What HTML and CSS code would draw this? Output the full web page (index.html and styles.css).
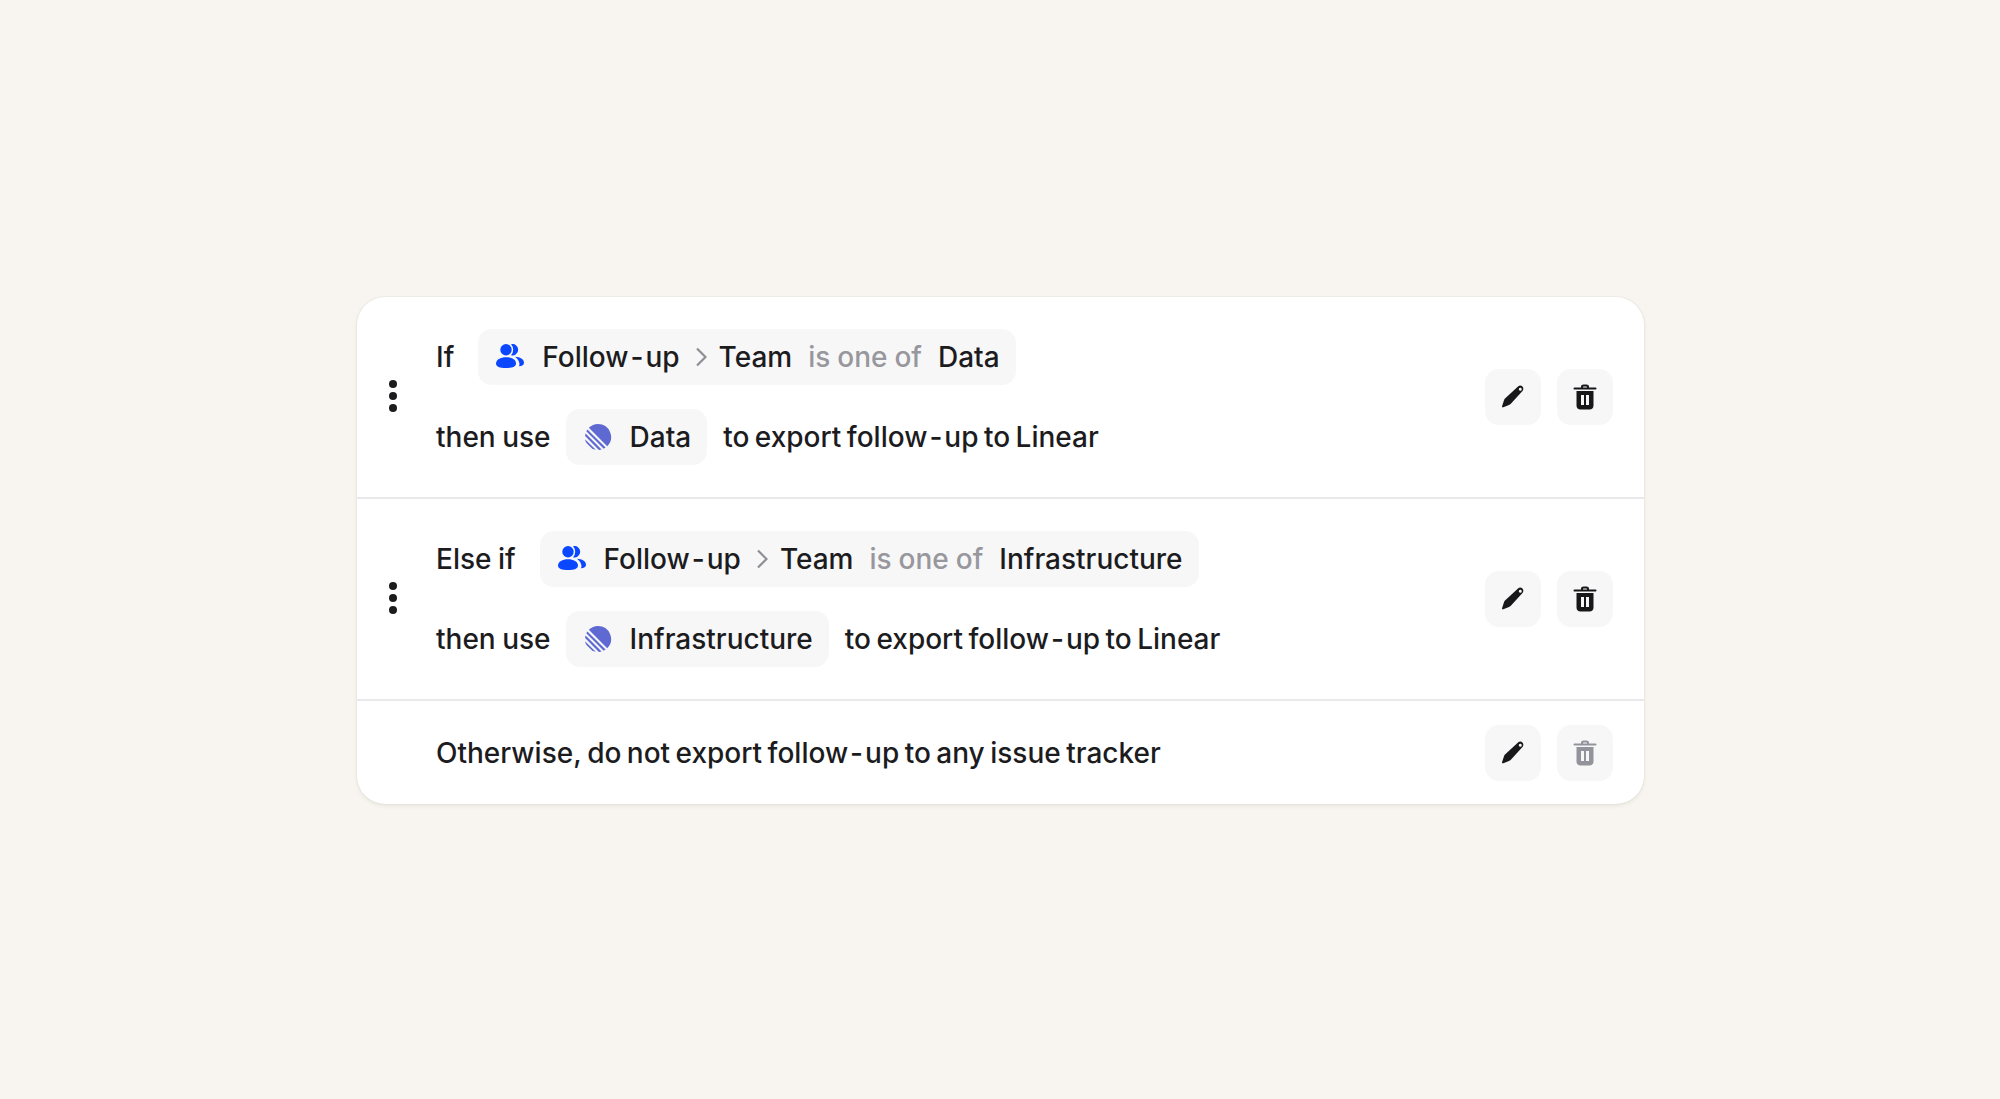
FILE: index.html
```html
<!DOCTYPE html>
<html lang="en">
<head>
<meta charset="utf-8">
<title>Export rules</title>
<link rel="stylesheet" href="styles.css">
</head>
<body>
<svg width="0" height="0" class="defs">
  <defs>
    <symbol id="people" viewBox="0 0 28 24">
      <circle cx="10" cy="5.700" r="5.700"/>
      <path d="M0 19.500C0 15.500 4.500 13.200 10 13.200s10 2.300 10 6.300c0 3.200-3.500 4.500-10 4.500S0 22.700 0 19.500z"/>
      <path d="M15 .2A5.700 5.700 0 1 1 15 11.200 8 8 0 0 0 15 .2z"/>
      <path d="M19 12.800c5 .2 9 2.500 9 6 0 2.400-2 3.400-5 3.500.4-1 .6-2 .4-3-.4-2.400-2-4.500-4.400-6.500z"/>
    </symbol>
    <symbol id="linear" viewBox="0 0 26 26">
      <path d="M13 0a13 13 0 0 1 9.200 22.200L3.800 3.800A13 13 0 0 1 13 0z"/>
      <path d="M2.400 5.400 20.600 23.600a13 13 0 0 1-1.900 1.100L1.300 7.300a13 13 0 0 1 1.100-1.900z"/>
      <path d="M.6 9.400 16.600 25.400a13 13 0 0 1-2.700.5L.1 12.100a13 13 0 0 1 .5-2.700z"/>
      <path d="M0 15.200 10.800 25.800a13 13 0 0 1-4-1.500L1.500 19a13 13 0 0 1-1.500-3.800z"/>
    </symbol>
    <symbol id="pencil" viewBox="0 0 24 24">
      <path fill-rule="evenodd" d="M17 1.500c1.300-1.200 3.200-1.200 4.400 0s1.300 3.200.1 4.500L9.600 18.900c-.5.500-1 .8-1.600 1L2.300 22.300c-.9.300-1.500-.3-1.200-1.200L3 15.200c.2-.7.500-1.200 1-1.700zM19.200 2.700a1.500 1.500 0 1 0 .1 3 1.500 1.500 0 0 0-.1-3z"/>
    </symbol>
    <symbol id="trash" viewBox="0 0 24 26">
      <path fill-rule="evenodd" d="M8 3.500V2.800C8 1.300 9.200.5 10.500.5h3C14.800.5 16 1.300 16 2.800v.7h6.500a1 1 0 0 1 0 2h-21a1 1 0 0 1 0-2zM10 3.500h4V3c0-.4-.2-.6-.6-.6h-2.800c-.4 0-.6.200-.6.600z"/>
      <path fill-rule="evenodd" d="M3.500 7h17v14.500c0 2.500-1.700 4-4 4h-9c-2.300 0-4-1.500-4-4zM8 11v10h3V11zM13 11v10h3V11z"/>
    </symbol>
  </defs>
</svg>
<main class="card">
  <section class="row row-rule">
    <span class="handle"><i></i><i></i><i></i></span>
    <div class="rule">
      <div class="line">
        <span class="word-if">If</span>
        <span class="pill">
          <svg class="ico ico-people"><use href="#people"/></svg>
          <span class="lab">Follow<span class="hy">-</span>up</span>
          <svg class="chev" viewBox="0 0 12 20"><path d="M2 1.500l8.500 8.500-8.500 8.500"/></svg>
          <span>Team</span>
          <span class="muted">is one of</span>
          <span>Data</span>
        </span>
      </div>
      <div class="line">
        <span class="word-then">then use</span>
        <span class="pill">
          <svg class="ico ico-linear"><use href="#linear"/></svg>
          <span class="lab">Data</span>
        </span>
        <span>to export follow<span class="hy">-</span>up to Linear</span>
      </div>
    </div>
    <div class="actions">
      <button class="btn"><svg class="act"><use href="#pencil"/></svg></button>
      <button class="btn"><svg class="act act-trash"><use href="#trash"/></svg></button>
    </div>
  </section>
  <section class="row row-rule">
    <span class="handle"><i></i><i></i><i></i></span>
    <div class="rule">
      <div class="line">
        <span class="word-if">Else if</span>
        <span class="pill">
          <svg class="ico ico-people"><use href="#people"/></svg>
          <span class="lab">Follow<span class="hy">-</span>up</span>
          <svg class="chev" viewBox="0 0 12 20"><path d="M2 1.500l8.500 8.500-8.500 8.500"/></svg>
          <span>Team</span>
          <span class="muted">is one of</span>
          <span>Infrastructure</span>
        </span>
      </div>
      <div class="line">
        <span class="word-then">then use</span>
        <span class="pill">
          <svg class="ico ico-linear"><use href="#linear"/></svg>
          <span class="lab">Infrastructure</span>
        </span>
        <span>to export follow<span class="hy">-</span>up to Linear</span>
      </div>
    </div>
    <div class="actions">
      <button class="btn"><svg class="act"><use href="#pencil"/></svg></button>
      <button class="btn"><svg class="act act-trash"><use href="#trash"/></svg></button>
    </div>
  </section>
  <section class="row row-last">
    <div class="rule">
      <div class="line-plain"><span class="strong">Otherwise,</span> do not export follow<span class="hy">-</span>up to any issue tracker</div>
    </div>
    <div class="actions">
      <button class="btn"><svg class="act"><use href="#pencil"/></svg></button>
      <button class="btn"><svg class="act act-trash off"><use href="#trash"/></svg></button>
    </div>
  </section>
</main>
</body>
</html>
```

FILE: styles.css
```css
* { box-sizing: border-box; }
html, body { height: 100%; }
body {
  margin: 0;
  background: #f8f5f0;
  font-family: Inter, "Liberation Sans", sans-serif;
  font-size: 28px;
  font-weight: 450;
  word-spacing: -2px;
  line-height: 36px;
  color: #1c1c1f;
  padding: 297px 356px 0 357px;
}
.defs { position: absolute; }
.card {
  height: 507px;
  background: #fff;
  border-radius: 28px;
  box-shadow: 0 0 2px rgba(60, 50, 30, .12), 0 2px 4px rgba(60, 50, 30, .07);
  overflow: hidden;
  display: flex;
  flex-direction: column;
}
.row {
  display: flex;
  align-items: center;
  padding: 0 31px 0 79px;
  position: relative;
}
.row-rule { height: 202px; padding-bottom: 1px; border-bottom: 2px solid #e9e9ec; }
.row-last { flex: 1; }
.handle {
  position: absolute;
  left: 32px;
  top: 50%;
  margin-top: -17px;
  display: flex;
  flex-direction: column;
  gap: 4px;
}
.handle i { width: 8px; height: 8px; border-radius: 50%; background: #1c1c1f; }
.rule { flex: 1; display: flex; flex-direction: column; gap: 24px; }
.line { display: flex; align-items: center; height: 56px; white-space: nowrap; }
.line-plain { white-space: nowrap; }
.strong { font-weight: 500; word-spacing: 0; }
.word-if { margin-right: 24px; word-spacing: -1px; }
.word-then { margin-right: 15px; word-spacing: -1px; }
.pill {
  display: inline-flex;
  align-items: center;
  height: 56px;
  padding: 0 16px 0 17px;
  margin-right: 16px;
  background: #f7f7f8;
  border-radius: 14px;
}
.pill > * { flex: none; }
.ico { width: 28px; height: 24px; margin-right: 19px; }
.ico-people { fill: #0a47ff; margin-left: 1px; margin-right: 18px; margin-bottom: 2px; }
.ico-linear { fill: #5e6ad2; height: 26px; margin-left: 1px; margin-right: 18px; }
.chev { width: 12px; height: 20px; margin: 0 12px 0 15px; fill: none; stroke: #8e8e94; stroke-width: 2.2; }
.muted { color: #97979d; margin: 0 16px; word-spacing: -0.5px; }
.hy { margin: 0 2px; }
.actions { display: flex; gap: 16px; }
.btn {
  width: 56px;
  height: 56px;
  padding: 0;
  border: 0;
  border-radius: 14px;
  background: #f7f7f8;
  display: flex;
  align-items: center;
  justify-content: center;
}
.act { width: 24px; height: 24px; fill: #18181b; }
.act-trash { height: 26px; }
.off { fill: #93939b; }
```
